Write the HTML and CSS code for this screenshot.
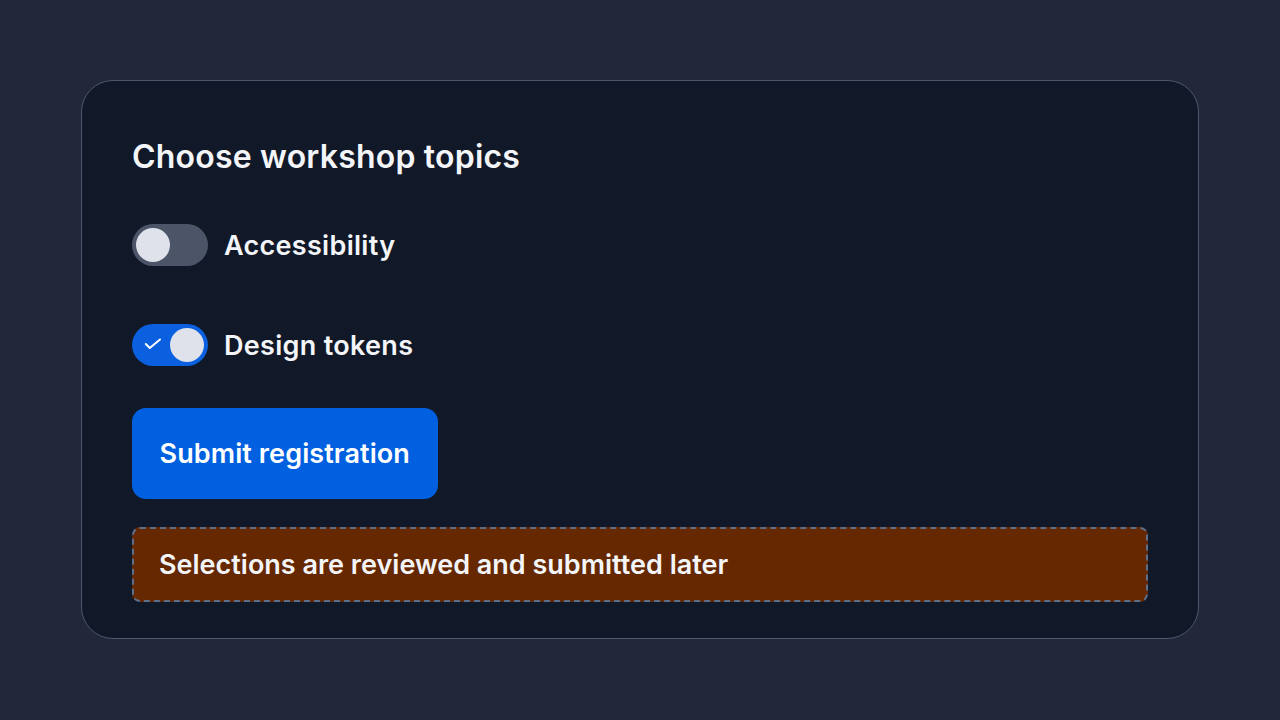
FILE: index.html
```html
<html>
  <head>
    <title>Workshop registration</title>
    <link rel="stylesheet" href="styles.css">
  </head>
  <body>
    <form class="card">
      <h2 class="card-title">Choose workshop topics</h2>

      <label class="topic">
        <span class="switch">
          <span class="knob"></span>
        </span>
        <span class="topic-name">Accessibility</span>
      </label>

      <label class="topic">
        <span class="switch on">
          <svg class="tick" viewBox="0 0 18 18"><path d="M1.8 8l4 4L16 3.5"/></svg>
          <span class="knob"></span>
        </span>
        <span class="topic-name">Design tokens</span>
      </label>

      <button type="button" class="submit">Submit registration</button>

      <div class="notice">Selections are reviewed and submitted later</div>
    </form>
  </body>
</html>
```

FILE: styles.css
```css
html, body {
  margin: 0;
  height: 100%;
}
body {
  background: #222739;
  font-family: 'Inter', 'Noto Sans', sans-serif;
  color: #f3f5f9;
  padding: 80px 81px;
  box-sizing: border-box;
}
.card {
  margin: 0;
  background: #111827;
  border: 1.5px solid #4d576b;
  border-radius: 32px;
  padding: 50px 50px 36px;
  display: flex;
  flex-direction: column;
  align-items: flex-start;
}
.card-title {
  margin: 8px 0 0;
  font-size: 32px;
  line-height: 36px;
  font-weight: 600;
  letter-spacing: 0.2px;
}
.topic {
  display: flex;
  align-items: center;
  gap: 16px;
  font-size: 27px;
  font-weight: 600;
  letter-spacing: 0.3px;
  margin-top: 49px;
}
.topic + .topic {
  margin-top: 58px;
}
.switch {
  position: relative;
  width: 76px;
  height: 42px;
  border-radius: 21px;
  background: #4b5567;
  box-sizing: border-box;
  padding: 4px;
  display: flex;
}
.switch.on {
  background: #0a60df;
  justify-content: flex-end;
}
.knob {
  width: 34px;
  height: 34px;
  border-radius: 50%;
  background: #dfe2ea;
}
.tick {
  position: absolute;
  left: 12px;
  top: 12px;
  width: 18px;
  height: 18px;
  fill: none;
  stroke: #ffffff;
  stroke-width: 2;
  stroke-linecap: round;
  stroke-linejoin: round;
}
.submit {
  margin-top: 42px;
  background: #0060df;
  color: #ffffff;
  border: 0;
  border-radius: 14px;
  height: 91px;
  padding: 0 27.5px;
  font-family: inherit;
  font-size: 27px;
  font-weight: 600;
  letter-spacing: 0.1px;
}
.notice {
  margin-top: 28px;
  align-self: stretch;
  background: #652800;
  border: 2px dashed #5f6e87;
  border-radius: 8px;
  padding: 0 25px;
  height: 75px;
  box-sizing: border-box;
  display: flex;
  align-items: center;
  font-size: 27px;
  font-weight: 600;
}
```
